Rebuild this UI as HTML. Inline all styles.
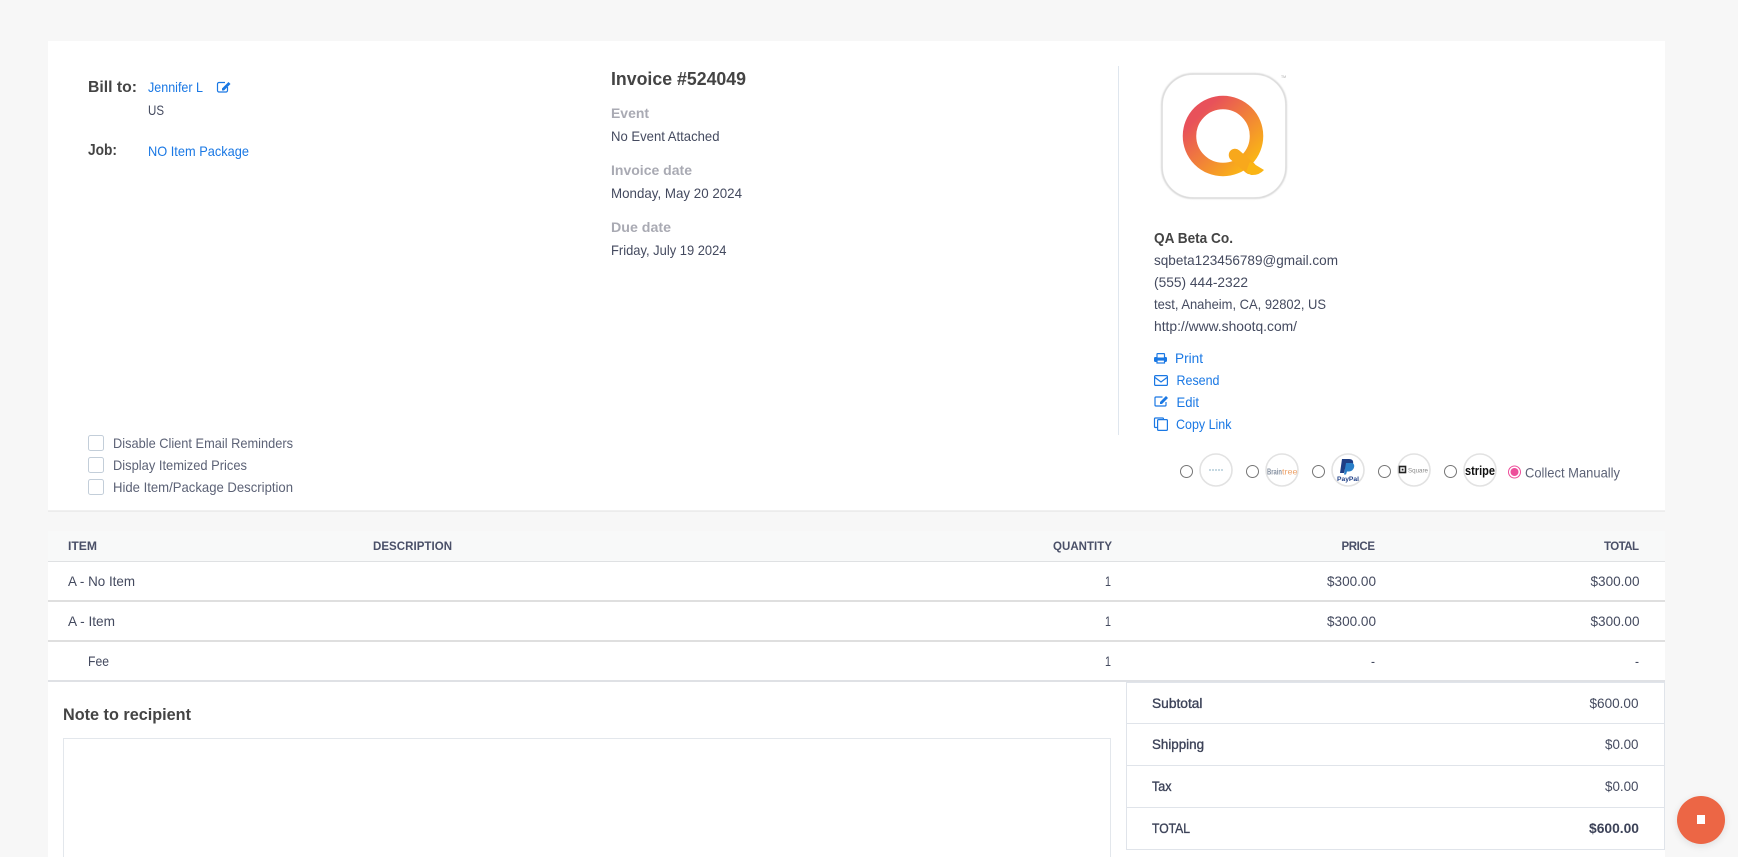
<!DOCTYPE html>
<html lang="en"><head><meta charset="utf-8"><title>Invoice #524049</title>
<style>
html,body{margin:0;padding:0;background:#f7f7f7;width:1738px;height:857px;overflow:hidden}
svg{display:block;position:absolute;left:0;top:0}
text{font-family:"Liberation Sans",sans-serif;font-size:14px;fill:#444a5f}
.a{fill:#1a78e4}.b{font-weight:700;fill:#444}.g{font-weight:700;fill:#a9aab3}
.h{font-weight:700;font-size:11.5px;fill:#4a5068}.s{font-weight:400;fill:#3c4258;stroke:#3c4258;stroke-width:.35px;font-size:13.5px}
.l{fill:#5c6276}
</style></head><body>
<svg width="1738" height="857" viewBox="0 0 1738 857" xmlns="http://www.w3.org/2000/svg">
<defs>
<linearGradient id="q" gradientUnits="userSpaceOnUse" x1="1195" y1="108" x2="1250" y2="165"><stop offset="0.1" stop-color="#e8515a"/><stop offset="1" stop-color="#fab515"/></linearGradient>
<filter id="bl" x="-20%" y="-20%" width="140%" height="140%"><feGaussianBlur stdDeviation=".8"/></filter>
<filter id="fs" x="-30%" y="-30%" width="160%" height="160%"><feGaussianBlur stdDeviation="4"/></filter>
</defs>
<rect x="48" y="41" width="1617" height="470" fill="#fff"/>
<rect x="48" y="510.500" width="1617" height="1" fill="#e2e2e2"/>
<rect x="48" y="531" width="1617" height="326" fill="#fff"/>
<rect x="48" y="531" width="1617" height="30" fill="#f8f9f9"/>
<rect x="48" y="561" width="1617" height="1" fill="#dfe1e3"/>
<rect x="48" y="600" width="1617" height="2" fill="#dfdfdf"/>
<rect x="48" y="640" width="1617" height="2" fill="#dfdfdf"/>
<rect x="48" y="680" width="1617" height="2" fill="#dfe1e5"/>

<text x="88" y="92" class="b" style="font-size:16px" textLength="49" lengthAdjust="spacingAndGlyphs">Bill to:</text>
<text x="148" y="92" class="a" textLength="55" lengthAdjust="spacingAndGlyphs">Jennifer L</text>
<path d="M227.500 87v3.500a1.500 1.500 0 0 1-1.500 1.500h-7a1.500 1.500 0 0 1-1.500-1.500v-6.500a1.500 1.500 0 0 1 1.500-1.500h6" fill="none" stroke="#1a78e4" stroke-width="1.200"/>
<path d="M222 88.500l6.500-6.500 2 2-6.500 6.500h-2z" fill="#1a78e4"/>
<text x="148" y="115" textLength="16" lengthAdjust="spacingAndGlyphs">US</text>
<text x="88" y="155" class="b" style="font-size:16px" textLength="29" lengthAdjust="spacingAndGlyphs">Job:</text>
<text x="148" y="156" class="a" textLength="101" lengthAdjust="spacingAndGlyphs">NO Item Package</text>

<text x="611" y="85" class="b" style="font-size:18px" textLength="135" lengthAdjust="spacingAndGlyphs">Invoice #524049</text>
<text x="611" y="118" class="g" textLength="38" lengthAdjust="spacingAndGlyphs">Event</text>
<text x="611" y="141" textLength="108.500" lengthAdjust="spacingAndGlyphs">No Event Attached</text>
<text x="611" y="175" class="g" textLength="81" lengthAdjust="spacingAndGlyphs">Invoice date</text>
<text x="611" y="198" textLength="131" lengthAdjust="spacingAndGlyphs">Monday, May 20 2024</text>
<text x="611" y="232" class="g" textLength="60" lengthAdjust="spacingAndGlyphs">Due date</text>
<text x="611" y="255" textLength="115.500" lengthAdjust="spacingAndGlyphs">Friday, July 19 2024</text>

<rect x="1118" y="66" width="1" height="369" fill="#dfe6ee"/>

<rect x="1162" y="74" width="124" height="124" rx="31" fill="#fff" stroke="#cbcbcb" stroke-width="1.500" filter="url(#bl)"/>
<rect x="1163" y="75" width="122" height="122" rx="30" fill="#fff"/>
<circle cx="1223" cy="136" r="33.500" fill="none" stroke="url(#q)" stroke-width="13.500"/>
<path d="M1235 155L1250 168" stroke="#f8a81c" stroke-width="12.500" stroke-linecap="round" fill="none"/>
<path d="M1250 161.500L1264 170Q1259 175.500 1251 175L1246 172Z" fill="#fab515"/>
<text x="1281" y="78" style="font-size:3.500px;fill:#aaa">TM</text>

<text x="1154" y="243" class="b" style="font-size:15px" textLength="79" lengthAdjust="spacingAndGlyphs">QA Beta Co.</text>
<text x="1154" y="265" textLength="184" lengthAdjust="spacingAndGlyphs">sqbeta123456789@gmail.com</text>
<text x="1154" y="287" textLength="94" lengthAdjust="spacingAndGlyphs">(555) 444-2322</text>
<text x="1154" y="309" textLength="172" lengthAdjust="spacingAndGlyphs">test, Anaheim, CA, 92802, US</text>
<text x="1154" y="331" textLength="143" lengthAdjust="spacingAndGlyphs">http://www.shootq.com/</text>

<rect x="1154" y="357" width="13" height="5" rx="1.200" fill="#1a78e4"/>
<rect x="1157" y="353.600" width="7.500" height="4.500" rx=".6" fill="#fff" stroke="#1a78e4" stroke-width="1.200"/>
<rect x="1157" y="360" width="7.500" height="3" fill="#fff" stroke="#1a78e4" stroke-width="1.200"/>
<text x="1175" y="363" class="a" textLength="28" lengthAdjust="spacingAndGlyphs">Print</text>
<g fill="none" stroke="#1a78e4" stroke-width="1.200">
<rect x="1154.600" y="375.600" width="12.800" height="9.800" rx="1.200"/><path d="M1155 377.500l6 4.500 6-4.500"/>
<path d="M1166 402v3a1 1 0 0 1-1 1h-9a1 1 0 0 1-1-1v-7a1 1 0 0 1 1-1h6.500"/>
<rect x="1157.600" y="419.600" width="9.800" height="10.800" rx="1"/><path d="M1157 427.500h-1.500a1 1 0 0 1-1-1v-7.500a1 1 0 0 1 1-1h7a1 1 0 0 1 1 1v.500"/>
</g>
<path d="M1160 402l6-6 2 2-6 6h-2z" fill="#1a78e4"/>
<text x="1176.500" y="385" class="a" textLength="43" lengthAdjust="spacingAndGlyphs">Resend</text>
<text x="1176.500" y="407" class="a" textLength="22.500" lengthAdjust="spacingAndGlyphs">Edit</text>
<text x="1176" y="429" class="a" textLength="55.500" lengthAdjust="spacingAndGlyphs">Copy Link</text>

<g fill="#fff" stroke="#c3ced9" stroke-width="1"><rect x="88.500" y="435.500" width="15" height="15" rx="2"/><rect x="88.500" y="457.500" width="15" height="15" rx="2"/><rect x="88.500" y="479.500" width="15" height="15" rx="2"/></g>
<text x="113" y="448" class="l" textLength="180" lengthAdjust="spacingAndGlyphs">Disable Client Email Reminders</text>
<text x="113" y="470" class="l" textLength="134" lengthAdjust="spacingAndGlyphs">Display Itemized Prices</text>
<text x="113" y="492" class="l" textLength="180" lengthAdjust="spacingAndGlyphs">Hide Item/Package Description</text>

<g fill="#fff" stroke="#767676" stroke-width="1">
<circle cx="1186.500" cy="471.500" r="6"/><circle cx="1252.500" cy="471.500" r="6"/><circle cx="1318.500" cy="471.500" r="6"/><circle cx="1384.500" cy="471.500" r="6"/><circle cx="1450.500" cy="471.500" r="6"/></g>
<g fill="#fff" stroke="#e2e2e2" stroke-width="1.600">
<circle cx="1216" cy="470" r="16"/><circle cx="1282" cy="470" r="16"/><circle cx="1348" cy="470" r="16"/><circle cx="1414" cy="470" r="16"/><circle cx="1480" cy="470" r="16"/></g>
<path d="M1209 470h14" stroke="#5e93ad" stroke-width="1" stroke-dasharray="2 1" opacity=".7"/>
<text x="1267" y="474.500" style="font-size:8px;font-weight:700;fill:#8590a0" textLength="15" lengthAdjust="spacingAndGlyphs">Brain</text>
<text x="1282" y="474.500" style="font-size:8px;fill:#eda36b" textLength="15.500" lengthAdjust="spacingAndGlyphs">tree</text>
<path d="M1342 459h7q5 0 4 5t-6 5h-2l-1 4h-4z" fill="#1f3f86"/>
<path d="M1346 463h6q3 1 2 4.500t-5 4h-2l-1 3h-2z" fill="#2a7fc9"/>
<text x="1337" y="481" style="font-size:6.500px;font-weight:700;fill:#1f3f86" textLength="22" lengthAdjust="spacingAndGlyphs">PayPal</text>
<rect x="1399.500" y="466.500" width="6" height="6" fill="none" stroke="#222" stroke-width="1.600"/><rect x="1401.700" y="468.700" width="1.800" height="1.800" fill="#222"/>
<text x="1408" y="472.500" style="font-size:6.500px;fill:#888" textLength="20" lengthAdjust="spacingAndGlyphs">Square</text>
<text x="1465" y="475" style="font-size:13px;font-weight:700;fill:#111" textLength="30" lengthAdjust="spacingAndGlyphs">stripe</text>
<circle cx="1514.500" cy="472" r="6" fill="#fff" stroke="#ed4d9a" stroke-width="1"/><circle cx="1514.500" cy="472" r="4" fill="#ed4d9a"/>
<text x="1525" y="477.500" class="l" textLength="95" lengthAdjust="spacingAndGlyphs">Collect Manually</text>

<text x="68" y="550" class="h" textLength="29" lengthAdjust="spacingAndGlyphs">ITEM</text>
<text x="373" y="550" class="h" textLength="79" lengthAdjust="spacing">DESCRIPTION</text>
<text x="1053" y="550" class="h" textLength="59" lengthAdjust="spacing">QUANTITY</text>
<text x="1341.500" y="550" class="h" textLength="33.500" lengthAdjust="spacing">PRICE</text>
<text x="1604" y="550" class="h" textLength="35" lengthAdjust="spacing">TOTAL</text>

<text x="68" y="586" textLength="67" lengthAdjust="spacingAndGlyphs">A - No Item</text>
<text x="68" y="626" textLength="47" lengthAdjust="spacingAndGlyphs">A - Item</text>
<text x="88" y="666" textLength="21" lengthAdjust="spacingAndGlyphs">Fee</text>
<g>
<text x="1105" y="586" textLength="6" lengthAdjust="spacingAndGlyphs">1</text>
<text x="1105" y="626" textLength="6" lengthAdjust="spacingAndGlyphs">1</text>
<text x="1105" y="666" textLength="6" lengthAdjust="spacingAndGlyphs">1</text>
<text x="1327" y="586" textLength="49" lengthAdjust="spacingAndGlyphs">$300.00</text>
<text x="1327" y="626" textLength="49" lengthAdjust="spacingAndGlyphs">$300.00</text>
<text x="1590.500" y="586" textLength="49" lengthAdjust="spacingAndGlyphs">$300.00</text>
<text x="1590.500" y="626" textLength="49" lengthAdjust="spacingAndGlyphs">$300.00</text>
<text x="1371" y="666" textLength="4" lengthAdjust="spacingAndGlyphs">-</text>
<text x="1635" y="666" textLength="4" lengthAdjust="spacingAndGlyphs">-</text>
</g>

<text x="63" y="720" class="b" style="font-size:17px" textLength="128" lengthAdjust="spacingAndGlyphs">Note to recipient</text>
<rect x="63.500" y="738.500" width="1047" height="130" fill="#fff" stroke="#e3e7ec"/>

<rect x="1126.500" y="682.500" width="538" height="167" fill="#fff" stroke="#e0e4ea"/>
<g fill="#e0e4ea"><rect x="1127" y="723" width="538" height="1"/><rect x="1127" y="765" width="538" height="1"/><rect x="1127" y="807" width="538" height="1"/></g>
<text x="1152" y="708" class="s" textLength="50.500" lengthAdjust="spacingAndGlyphs">Subtotal</text>
<text x="1152" y="749" class="s" textLength="52" lengthAdjust="spacingAndGlyphs">Shipping</text>
<text x="1152" y="791" class="s" textLength="19.500" lengthAdjust="spacingAndGlyphs">Tax</text>
<text x="1152" y="833" class="s" textLength="38" lengthAdjust="spacingAndGlyphs">TOTAL</text>
<text x="1589.500" y="708" textLength="49" lengthAdjust="spacingAndGlyphs">$600.00</text>
<text x="1605" y="749" textLength="33.500" lengthAdjust="spacingAndGlyphs">$0.00</text>
<text x="1605" y="791" textLength="33.500" lengthAdjust="spacingAndGlyphs">$0.00</text>
<text x="1589" y="833" style="font-weight:700;fill:#3c4258" textLength="50" lengthAdjust="spacingAndGlyphs">$600.00</text>

<circle cx="1701" cy="822" r="24" fill="#000" opacity=".1" filter="url(#fs)"/>
<circle cx="1701" cy="820" r="24" fill="#ec6645"/>
<rect x="1697" y="815" width="8" height="9" fill="#fff"/>
</svg>
</body></html>
